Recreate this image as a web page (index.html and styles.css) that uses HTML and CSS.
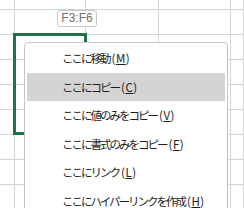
FILE: index.html
```html
<!DOCTYPE html>
<html>
	<head>
		<meta charset="utf-8" />
		<title></title>
		<link rel="stylesheet" href="styles.css">
	</head>
	<body>
		<div class="sheet">
			<div class="grid">
				<div></div><div></div><div></div><div></div><div></div>
				<div></div><div></div><div></div><div></div><div></div>
				<div></div><div></div><div></div><div></div><div></div>
				<div></div><div></div><div></div><div></div><div></div>
				<div></div><div></div><div></div><div></div><div></div>
				<div></div><div></div><div></div><div></div><div></div>
				<div></div><div></div><div></div><div></div><div></div>
				<div></div><div></div><div></div><div></div><div></div>
				<div></div><div></div><div></div><div></div><div></div>
			</div>
			<div class="selection"></div>
			<div class="tip">F3:F6</div>
			<div class="menu">
				<div class="item">ここに移動<span class="key">(<u>M</u>)</span></div>
				<div class="item active">ここにコピー<span class="key">(<u>C</u>)</span></div>
				<div class="item">ここに値のみをコピー<span class="key">(<u>V</u>)</span></div>
				<div class="item">ここに書式のみをコピー<span class="key">(<u>F</u>)</span></div>
				<div class="item">ここにリンク<span class="key">(<u>L</u>)</span></div>
				<div class="item">ここにハイパーリンクを作成<span class="key">(<u>H</u>)</span></div>
			</div>
		</div>
	</body>
</html>
```
FILE: styles.css
```css
*{
	margin: 0;
	padding: 0;
	box-sizing: border-box;
}
body{
	width: 244px;
	height: 208px;
	overflow: hidden;
	background: #fff;
}
.sheet{
	position: relative;
	width: 244px;
	height: 208px;
	overflow: hidden;
}
.grid{
	display: grid;
	grid-template-columns: 15px 71px 73px 72px 13px;
	grid-template-rows: 10px repeat(8, 25px);
}
.grid div{
	border-right: 1px solid #d4d4d4;
	border-bottom: 1px solid #d4d4d4;
}
.selection{
	position: absolute;
	left: 13px;
	top: 33px;
	width: 74px;
	height: 102px;
	border: 3px solid #217346;
}
.tip{
	position: absolute;
	left: 57px;
	top: 10px;
	width: 40px;
	height: 17px;
	border: 1px solid #c8c8c8;
	border-radius: 3px;
	background: #fff;
	color: #6e6e6e;
	font-family: "Liberation Sans", sans-serif;
	font-size: 12px;
	line-height: 15px;
	text-align: center;
}
.menu{
	position: absolute;
	left: 24px;
	top: 42px;
	width: 204px;
	height: 190px;
	padding: 1px 2px;
	border: 1px solid #c6c6c6;
	border-radius: 4px;
	background: #fff;
	font-family: "Noto Sans CJK JP", sans-serif;
	font-size: 11.5px;
	letter-spacing: -2px;
	color: #1e1e1e;
}
.item{
	height: 28.5px;
	line-height: 28.5px;
	padding-left: 35px;
	white-space: nowrap;
}
.key{
	margin-left: 2px;
	letter-spacing: 0.5px;
}
.active{
	background: #d4d4d4;
}
```
